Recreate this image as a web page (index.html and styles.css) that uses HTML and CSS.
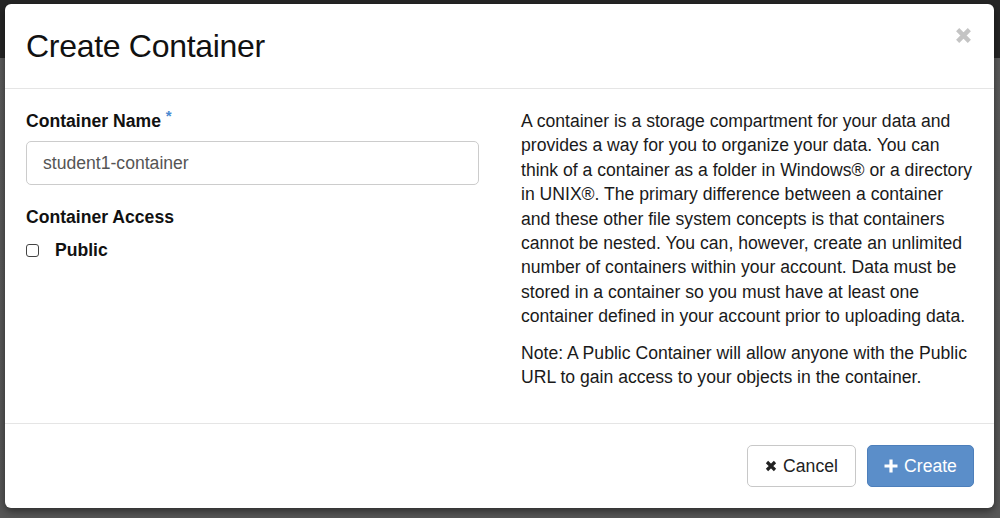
FILE: index.html
```html
<!DOCTYPE html>
<html>
<head>
<meta charset="utf-8">
<link rel="stylesheet" href="styles.css">
</head>
<body>
<div class="backdrop">
  <div class="modal">
    <div class="modal-header">
      <h3 class="modal-title">Create Container</h3>
      <span class="close" aria-label="Close">
        <svg width="17" height="17" viewBox="0 0 16 16"><path d="M2.5 2.5 L13.5 13.5 M13.5 2.5 L2.5 13.5" stroke="#c4c4c4" stroke-width="4.2" stroke-linecap="butt"/></svg>
      </span>
    </div>
    <div class="modal-body">
      <div class="col-left">
        <label class="field-label">Container Name <span class="req">*</span></label>
        <div class="input">student1-container</div>
        <div class="field-label access">Container Access</div>
        <div class="check-row">
          <input type="checkbox" class="check">
          <span class="check-label">Public</span>
        </div>
      </div>
      <div class="col-right">
        <p>A container is a storage compartment for your data and provides a way for you to organize your data. You can think of a container as a folder in Windows® or a directory in UNIX®. The primary difference between a container and these other file system concepts is that containers cannot be nested. You can, however, create an unlimited number of containers within your account. Data must be stored in a container so you must have at least one container defined in your account prior to uploading data.</p>
        <p>Note: A Public Container will allow anyone with the Public URL to gain access to your objects in the container.</p>
      </div>
    </div>
    <div class="modal-footer">
      <button class="btn btn-default">
        <svg width="12" height="12" viewBox="0 0 12 12"><path d="M2 2 L10 10 M10 2 L2 10" stroke="#222" stroke-width="3.2"/></svg>
        Cancel
      </button>
      <button class="btn btn-primary">
        <svg width="14" height="14" viewBox="0 0 14 14"><path d="M7 0.5 V13.5 M0.5 7 H13.5" stroke="#fff" stroke-width="3.2"/></svg>
        Create
      </button>
    </div>
  </div>
</div>
</body>
</html>
```

FILE: styles.css
```css
* { box-sizing: border-box; }
html, body {
  margin: 0;
  padding: 0;
  width: 1000px;
  height: 518px;
  overflow: hidden;
}
body {
  font-family: "Liberation Sans", Arial, Helvetica, sans-serif;
  background: linear-gradient(to bottom, #262626 0, #262626 58px, #5c5c5c 58px, #575757 100%);
  color: #222;
}
.backdrop {
  padding: 4px 6px 0 5px;
}
.modal {
  width: 989px;
  height: 504px;
  background: #fff;
  border-radius: 6px;
  box-shadow: 0 3px 9px rgba(0,0,0,0.5);
  display: flex;
  flex-direction: column;
}
.modal-header {
  height: 85px;
  border-bottom: 1px solid #e5e5e5;
  padding: 0 21px;
  display: flex;
  align-items: flex-start;
  justify-content: space-between;
}
.modal-title {
  margin: 0;
  padding-top: 26px;
  font-size: 32px;
  letter-spacing: -0.3px;
  font-weight: normal;
  line-height: 32px;
  color: #111;
}
.close {
  margin-top: 23px;
  margin-right: 1px;
  display: block;
}
.modal-body {
  padding: 20px 21px 21px 21px;
  display: grid;
  grid-template-columns: 453px 453px;
  column-gap: 42px;
  flex: 1;
}
.field-label {
  display: block;
  font-size: 17.6px;
  font-weight: bold;
  line-height: 24px;
  color: #111;
  margin-bottom: 8px;
}
.req {
  color: #4a89d0;
  font-size: 15px;
  line-height: 0;
  vertical-align: 6px;
  font-weight: bold;
}
.input {
  height: 44px;
  border: 1px solid #cccccc;
  border-radius: 5px;
  padding: 0 16px;
  font-size: 17.6px;
  line-height: 42px;
  color: #555;
}
.access {
  margin-top: 20px;
  margin-bottom: 9px;
}
.check-row {
  display: flex;
  align-items: center;
  height: 24px;
}
.check {
  appearance: none;
  -webkit-appearance: none;
  margin: 0 16px 0 0;
  width: 13px;
  height: 13px;
  border: 1px solid #444;
  border-radius: 3px;
  background: #fff;
}
.check-label {
  font-size: 17.6px;
  font-weight: bold;
  color: #111;
}
.col-right p {
  margin: 0 0 12px 0;
  font-size: 17.6px;
  line-height: 24.4px;
  color: #1a1a1a;
}
.modal-footer {
  height: 85px;
  border-top: 1px solid #e5e5e5;
  padding: 0 20px;
  display: flex;
  align-items: center;
  justify-content: flex-end;
  gap: 11px;
}
.btn {
  height: 42px;
  border-radius: 5px;
  font-family: "Liberation Sans", Arial, Helvetica, sans-serif;
  font-size: 17.6px;
  display: flex;
  align-items: center;
  justify-content: center;
  gap: 6px;
  padding: 0 10px;
  cursor: pointer;
}
.btn-default {
  width: 109px;
  background: #fff;
  border: 1px solid #c8c8c8;
  color: #222;
}
.btn-primary {
  width: 107px;
  background: #5b8ec9;
  border: 1px solid #4d7fbb;
  color: #fff;
}
```
